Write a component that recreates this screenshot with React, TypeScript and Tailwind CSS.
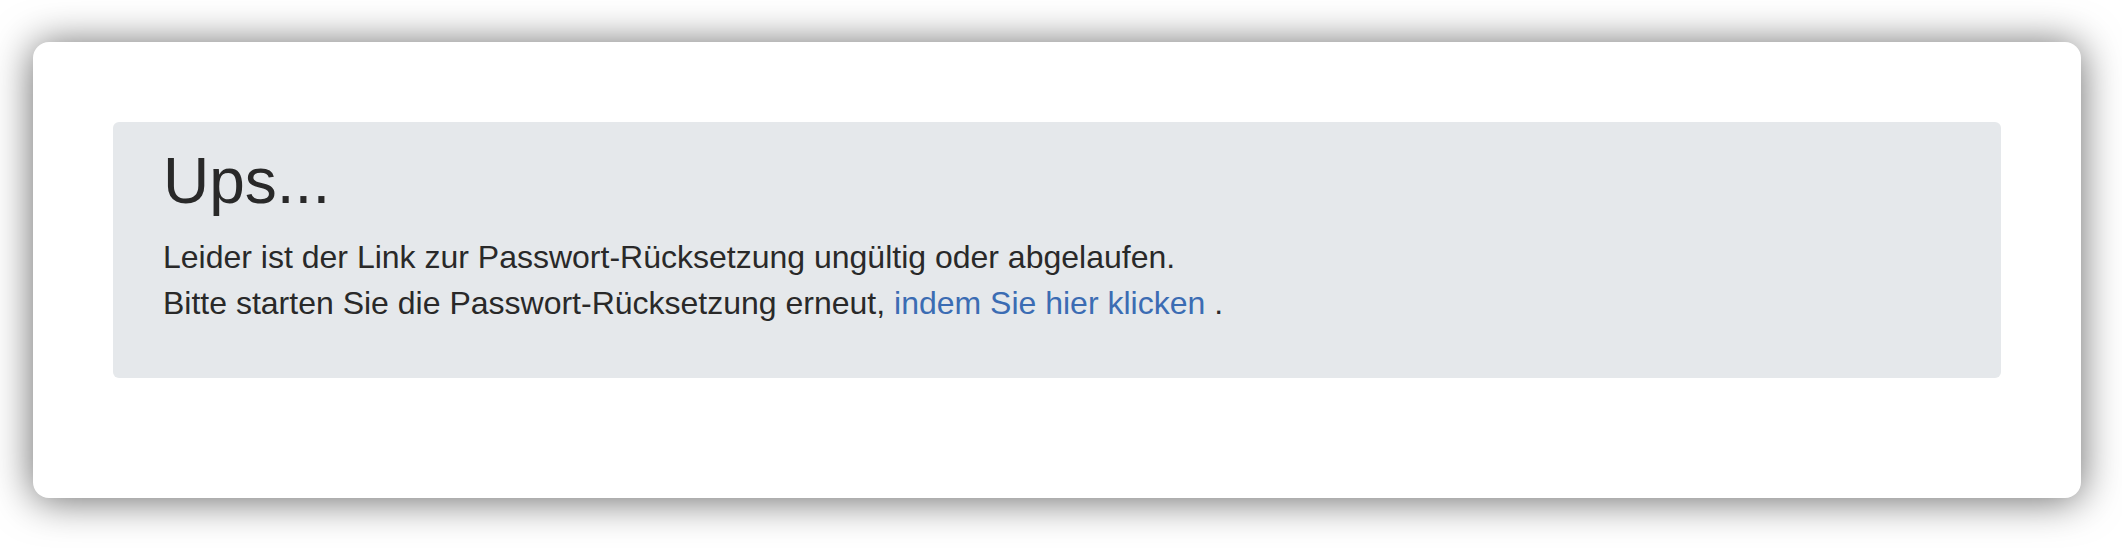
import React from "react";

const App: React.FC = () => {
  return (
    <div
      className="min-h-[548px] bg-white pt-[42px] pl-[33px] pr-[41px] pb-[50px]"
      style={{ fontFamily: '"Liberation Sans", Arial, sans-serif' }}
    >
      <div className="rounded-2xl bg-white px-[80px] pt-[80px] pb-[120px] shadow-[0_2px_40px_rgba(0,0,0,0.6)]">
        <div className="rounded-md bg-[#e5e8eb] pl-[50px] pr-8 pt-[21px] pb-[52px] text-[#292929]">
          <h1 className="text-[64px] font-normal leading-[1.2]">Ups...</h1>
          <p className="mt-[14px] text-[32px] leading-[46px]">
            Leider ist der Link zur Passwort-Rücksetzung ungültig oder abgelaufen.
            <br />
            Bitte starten Sie die Passwort-Rücksetzung erneut,{" "}
            <a href="#" className="text-[#3b6cb3] hover:underline">
              indem Sie hier klicken
            </a>{" "}
            .
          </p>
        </div>
      </div>
    </div>
  );
};

export default App;
